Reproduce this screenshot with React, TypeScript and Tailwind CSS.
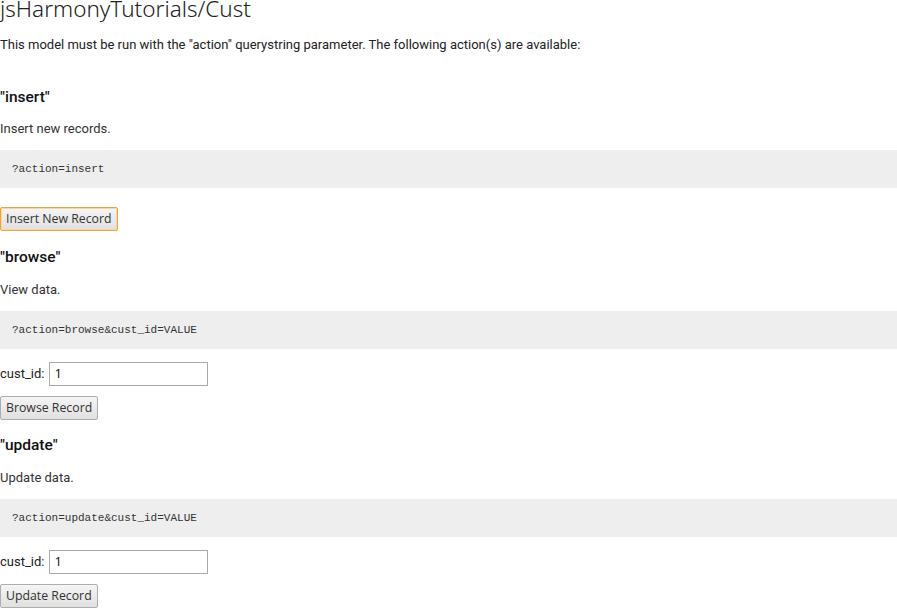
import React from "react";

const body = { fontFamily: "Roboto, 'Liberation Sans', sans-serif" };
const btnFont = { fontFamily: "'Open Sans', 'Noto Sans', sans-serif" };

function Code({ text }: { text: string }) {
  return (
    <div
      className="mt-[11px] h-[38px] bg-[#eeeeee] pl-[12px] flex items-center text-[11px] text-[#333]"
      style={{ fontFamily: "'Liberation Mono', monospace" }}
    >
      {text}
    </div>
  );
}

function Btn({ label, focused }: { label: string; focused?: boolean }) {
  return (
    <button
      className={
        "h-[24px] px-[5px] text-[12.3px] text-[#333] rounded-[2px] border bg-gradient-to-b from-[#f5f5f5] to-[#e0e0e0] leading-none " +
        (focused ? "border-[#e5a54a] shadow-[0_0_0_1px_#f3d9a8_inset]" : "border-[#adadad]")
      }
      style={btnFont}
    >
      {label}
    </button>
  );
}

function Field() {
  return (
    <div className="mt-[13px] h-[24px] flex items-center text-[13px] text-[#222]">
      <span>cust_id:</span>
      <div
        className="ml-[5px] w-[159px] h-[24px] border border-[#a9a9a9] flex items-center pl-[4px] text-[13px] text-[#111]"
        style={btnFont}
      >
        1
      </div>
    </div>
  );
}

export default function App() {
  return (
    <div className="bg-white w-[897px] h-[608px] overflow-hidden text-[#333]" style={body}>
      <div
        className="-mt-[4px] h-[26px] text-[22.5px] leading-[26px] font-light text-[#222]"
        style={{ fontFamily: "'Noto Sans', 'Open Sans', sans-serif" }}
      >
        jsHarmonyTutorials/Cust
      </div>
      <div className="mt-[13px] h-[20px] leading-[20px] text-[13px] text-[#222]">
        This model must be run with the "action" querystring parameter. The following action(s) are available:
      </div>

      <div className="mt-[32px] h-[20px] leading-[20px] text-[15.5px] font-medium text-[#111]">"insert"</div>
      <div className="mt-[12px] h-[20px] leading-[20px] text-[13px] text-[#333]">Insert new records.</div>
      <Code text="?action=insert" />
      <div className="mt-[19px] flex">
        <Btn label="Insert New Record" focused />
      </div>

      <div className="mt-[16px] h-[20px] leading-[20px] text-[15.5px] font-medium text-[#111]">"browse"</div>
      <div className="mt-[13px] h-[20px] leading-[20px] text-[13px] text-[#333]">View data.</div>
      <Code text="?action=browse&cust_id=VALUE" />
      <Field />
      <div className="mt-[10px] flex">
        <Btn label="Browse Record" />
      </div>

      <div className="mt-[15px] h-[20px] leading-[20px] text-[15.5px] font-medium text-[#111]">"update"</div>
      <div className="mt-[13px] h-[20px] leading-[20px] text-[13px] text-[#333]">Update data.</div>
      <Code text="?action=update&cust_id=VALUE" />
      <Field />
      <div className="mt-[10px] flex">
        <Btn label="Update Record" />
      </div>
    </div>
  );
}
